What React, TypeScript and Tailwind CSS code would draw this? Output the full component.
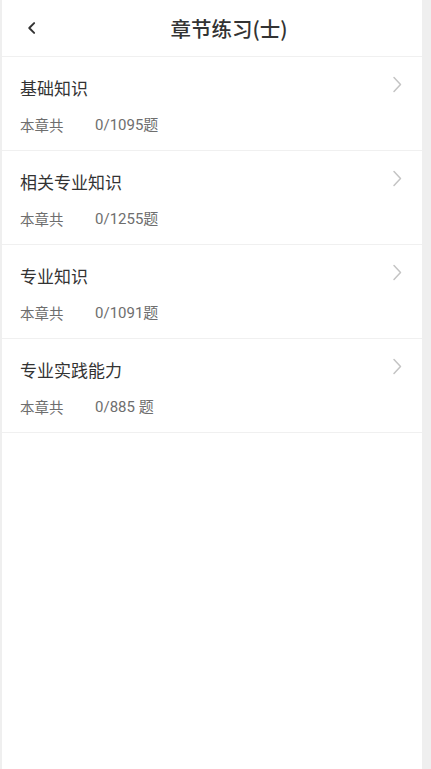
import React from "react";

interface Chapter {
  name: string;
  done: number;
  total: string;
}

const chapters: Chapter[] = [
  { name: "基础知识", done: 0, total: "1095题" },
  { name: "相关专业知识", done: 0, total: "1255题" },
  { name: "专业知识", done: 0, total: "1091题" },
  { name: "专业实践能力", done: 0, total: "885 题" },
];

const font = { fontFamily: '"Noto Sans CJK SC", "Noto Sans", sans-serif' };
const numFont = { fontFamily: 'Roboto, "Noto Sans CJK SC", sans-serif' };

export default function App() {
  return (
    <div className="min-h-screen bg-[#efefef] flex" style={font}>
      <div className="ml-[2px] w-[420px] min-h-screen bg-white">
        {/* Header */}
        <div className="h-[57px] flex items-center border-b border-[#f0f0f0]">
          <button className="w-[34px] h-full flex items-center pl-[25px]" aria-label="back">
            <svg width="12" height="16" viewBox="0 0 12 16" fill="none">
              <path d="M9.5 1.5 L3 8 L9.5 14.5" stroke="#333" strokeWidth="2.6" strokeLinecap="round" strokeLinejoin="round" />
            </svg>
          </button>
          <h1 className="flex-1 text-center text-[20.5px] leading-[28px] font-medium text-[#333] pb-[1px]">
            章节练习(士)
          </h1>
        </div>

        {/* Chapter list */}
        {chapters.map((c) => (
          <div key={c.name} className="pl-[18px] pr-[19px] pt-[19px] pb-[15px] border-b border-[#f0f0f0]">
            <div className="flex items-start justify-between">
              <span className="text-[17px] leading-[24px] text-[#333]">{c.name}</span>
              <svg width="11" height="17" viewBox="0 0 11 17" fill="none">
                <path d="M2 1.5 L8.5 8.5 L2 15.5" stroke="#c4c4c4" strokeWidth="1.5" strokeLinecap="round" strokeLinejoin="round" />
              </svg>
            </div>
            <div className="mt-[15px] flex text-[14.5px] leading-[20px] text-[#6e6e6e]">
              <span className="w-[75px]">本章共</span>
              <span className="text-[15px]" style={numFont}>
                {c.done}/{c.total}
              </span>
            </div>
          </div>
        ))}
      </div>
    </div>
  );
}
